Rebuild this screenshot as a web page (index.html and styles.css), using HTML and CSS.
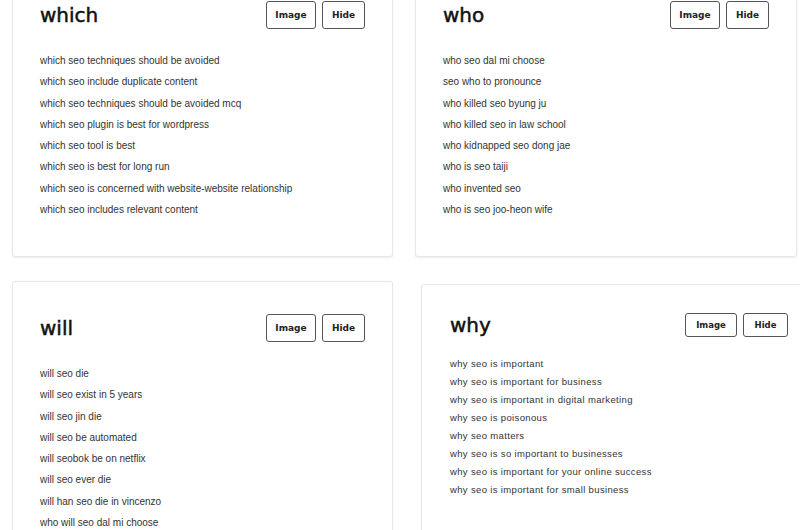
FILE: index.html
```html
<!DOCTYPE html>
<html>

<head>
    <meta charset="UTF-8">
    <title>SEO questions</title>
    <link rel="stylesheet" href="styles.css">
</head>

<body>
    <div class="page">
        <div class="card">
            <div class="card-head">
                <h2>which</h2>
                <div class="actions">
                    <button class="btn">Image</button>
                    <button class="btn">Hide</button>
                </div>
            </div>
            <ul class="list">
                <li>which seo techniques should be avoided</li>
                <li>which seo include duplicate content</li>
                <li>which seo techniques should be avoided mcq</li>
                <li>which seo plugin is best for wordpress</li>
                <li>which seo tool is best</li>
                <li>which seo is best for long run</li>
                <li>which seo is concerned with website-website relationship</li>
                <li>which seo includes relevant content</li>
            </ul>
        </div>
        <div class="card">
            <div class="card-head">
                <h2>who</h2>
                <div class="actions">
                    <button class="btn">Image</button>
                    <button class="btn">Hide</button>
                </div>
            </div>
            <ul class="list">
                <li>who seo dal mi choose</li>
                <li>seo who to pronounce</li>
                <li>who killed seo byung ju</li>
                <li>who killed seo in law school</li>
                <li>who kidnapped seo dong jae</li>
                <li>who is seo taiji</li>
                <li>who invented seo</li>
                <li>who is seo joo-heon wife</li>
            </ul>
        </div>
        <div class="card">
            <div class="card-head">
                <h2>will</h2>
                <div class="actions">
                    <button class="btn">Image</button>
                    <button class="btn">Hide</button>
                </div>
            </div>
            <ul class="list">
                <li>will seo die</li>
                <li>will seo exist in 5 years</li>
                <li>will seo jin die</li>
                <li>will seo be automated</li>
                <li>will seobok be on netflix</li>
                <li>will seo ever die</li>
                <li>will han seo die in vincenzo</li>
                <li>who will seo dal mi choose</li>
            </ul>
        </div>
        <div class="card card-compact">
            <div class="card-head">
                <h2>why</h2>
                <div class="actions">
                    <button class="btn">Image</button>
                    <button class="btn">Hide</button>
                </div>
            </div>
            <ul class="list">
                <li>why seo is important</li>
                <li>why seo is important for business</li>
                <li>why seo is important in digital marketing</li>
                <li>why seo is poisonous</li>
                <li>why seo matters</li>
                <li>why seo is so important to businesses</li>
                <li>why seo is important for your online success</li>
                <li>why seo is important for small business</li>
            </ul>
        </div>
    </div>
</body>

</html>
```

FILE: styles.css
```css
* {
    box-sizing: border-box;
}

body {
    margin: 0;
    background-color: #fff;
    overflow: hidden;
    font-family: "Liberation Sans", Arial, sans-serif;
}

.page {
    display: grid;
    grid-template-columns: 381px 382px;
    column-gap: 22px;
    row-gap: 24px;
    padding-left: 12px;
    margin-top: -32px;
}

.card {
    border: 1px solid #e8e8e8;
    border-radius: 3px;
    box-shadow: 0 1px 2px rgba(0, 0, 0, 0.08);
    padding: 32px 27px 36px;
    background-color: #fff;
}

.card-head {
    display: flex;
    justify-content: space-between;
    align-items: center;
    height: 28px;
}

.card-head h2 {
    margin: 0;
    font-family: "DejaVu Sans", sans-serif;
    font-weight: normal;
    font-size: 20px;
    color: #111;
    -webkit-text-stroke: 0.5px #111;
}

.actions {
    display: flex;
    gap: 6px;
}

.btn {
    height: 28px;
    padding: 0;
    border: 1px solid #555;
    border-radius: 3px;
    background-color: #fff;
    font-family: "DejaVu Sans", sans-serif;
    font-weight: bold;
    font-size: 9px;
    color: #222;
}

.btn:first-child {
    width: 50px;
}

.btn:last-child {
    width: 43px;
}

.list {
    list-style: none;
    margin: 21px 0 0;
    padding: 0;
    font-size: 10px;
    line-height: 21.25px;
    color: #333;
}

/* the last card is rendered a bit tighter */
.card-compact {
    width: 392px;
    margin: 3px 0 0 6px;
    padding: 28px 24px 40px 28px;
}

.card-compact .card-head {
    height: 24px;
}

.card-compact .btn {
    height: 24px;
    font-size: 8.5px;
}

.card-compact .btn:first-child {
    width: 52px;
}

.card-compact .btn:last-child {
    width: 45px;
}

.card-compact .list {
    margin-top: 18px;
    font-size: 9.5px;
    letter-spacing: 0.35px;
    line-height: 18px;
}
```
